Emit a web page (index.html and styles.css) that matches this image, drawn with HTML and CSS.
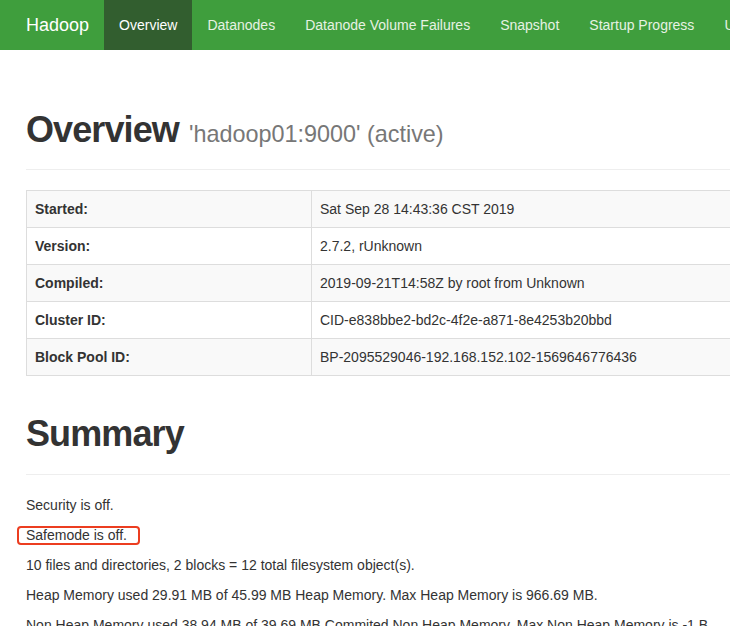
FILE: index.html
```html
<!DOCTYPE html>
<html>
<head>
<meta charset="utf-8">
<title>Namenode information</title>
<link rel="stylesheet" href="styles.css">
</head>
<body>
<header class="navbar">
  <div class="nav-inner">
    <a class="brand">Hadoop</a>
    <ul class="nav">
      <li class="active"><a>Overview</a></li>
      <li><a>Datanodes</a></li>
      <li><a>Datanode Volume Failures</a></li>
      <li><a>Snapshot</a></li>
      <li><a>Startup Progress</a></li>
      <li><a>Utilities</a></li>
    </ul>
  </div>
</header>
<main class="container">
  <div class="page-header first">
    <h1><span class="title">Overview</span> <small>'hadoop01:9000' (active)</small></h1>
  </div>
  <table class="info">
    <tr><th>Started:</th><td>Sat Sep 28 14:43:36 CST 2019</td></tr>
    <tr><th>Version:</th><td>2.7.2, rUnknown</td></tr>
    <tr><th>Compiled:</th><td>2019-09-21T14:58Z by root from Unknown</td></tr>
    <tr><th>Cluster ID:</th><td>CID-e838bbe2-bd2c-4f2e-a871-8e4253b20bbd</td></tr>
    <tr><th>Block Pool ID:</th><td>BP-2095529046-192.168.152.102-1569646776436</td></tr>
  </table>
  <div class="page-header second">
    <h1><span class="title">Summary</span></h1>
  </div>
  <p>Security is off.</p>
  <p><span class="marked">Safemode is off.</span></p>
  <p>10 files and directories, 2 blocks = 12 total filesystem object(s).</p>
  <p>Heap Memory used 29.91 MB of 45.99 MB Heap Memory. Max Heap Memory is 966.69 MB.</p>
  <p>Non Heap Memory used 38.94 MB of 39.69 MB Commited Non Heap Memory. Max Non Heap Memory is -1 B.</p>
</main>
</body>
</html>
```
FILE: styles.css
```css
html, body {
  margin: 0;
  padding: 0;
  overflow: hidden;
}
body {
  font-family: "Liberation Sans", Arial, sans-serif;
  font-size: 14px;
  line-height: 20px;
  color: #333;
  background: #fff;
  width: 1300px;
}
.navbar {
  height: 50px;
  background: #3f9e3d;
}
.nav-inner {
  display: flex;
  padding-left: 11px;
}
.brand {
  display: block;
  padding: 15px;
  font-size: 18px;
  line-height: 20px;
  color: #fff;
}
.nav {
  display: flex;
  margin: 0;
  padding: 0;
  list-style: none;
}
.nav li a {
  display: block;
  padding: 15px;
  line-height: 20px;
  color: #e6f2e3;
  white-space: nowrap;
}
.nav li.active a {
  background: #325e2f;
  color: #fff;
}
.container {
  padding: 0 26px;
  width: 1140px;
}
.page-header {
  border-bottom: 1px solid #eee;
  padding-bottom: 19px;
  margin-bottom: 20px;
}
.page-header.first {
  margin-top: 60px;
}
.page-header.second {
  margin-top: 38px;
  padding-bottom: 20px;
}
h1 {
  margin: 0;
  font-size: 36px;
  line-height: 40px;
  font-weight: 400;
  color: #333;
}
h1 .title {
  font-weight: bold;
  letter-spacing: -0.9px;
}
h1 small {
  font-size: 65%;
  line-height: 1;
  color: #777;
  font-weight: 400;
  letter-spacing: 0;
}
table.info {
  width: 100%;
  border-collapse: collapse;
  border: 1px solid #ddd;
}
table.info th, table.info td {
  border: 1px solid #ddd;
  padding: 8px;
  line-height: 20px;
  text-align: left;
  vertical-align: top;
}
table.info th {
  width: 268px;
  font-weight: bold;
}
table.info tr:nth-child(odd) {
  background: #f9f9f9;
}
p {
  margin: 0 0 10px;
  white-space: nowrap;
}
.marked {
  position: relative;
}
.marked::after {
  content: "";
  position: absolute;
  left: -9px;
  right: -13px;
  top: -1px;
  bottom: -2px;
  border: 2px solid #ec3d20;
  border-radius: 4px;
}
```
